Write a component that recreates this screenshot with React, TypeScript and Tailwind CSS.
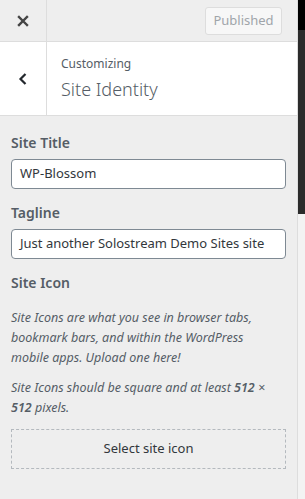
export default function App() {
  return (
    <div
      className="flex h-[499px] w-[305px] overflow-hidden bg-[#eeeeee] text-[#555d66]"
      style={{ fontFamily: '"Noto Sans", "Open Sans", sans-serif' }}
    >
      <div className="flex w-[298px] flex-col border-r border-[#dddddd]">
        <header className="flex h-[42px] shrink-0 items-center border-b border-[#dddddd] bg-[#eeeeee]">
          <button className="flex h-full w-[47px] items-center justify-center border-r border-[#dddddd] text-[#444]">
            <svg width="12" height="12" viewBox="0 0 12 12">
              <path d="M2 2 L10 10 M10 2 L2 10" stroke="currentColor" strokeWidth="2.4" strokeLinecap="square" />
            </svg>
          </button>
          <div className="flex flex-1 justify-end pr-[15px]">
            <span className="flex h-[28px] w-[77px] items-center justify-center rounded-[3px] border border-[#dddddd] bg-[#f7f7f7] text-[13px] text-[#a0a5aa]">
              Published
            </span>
          </div>
        </header>

        <div className="flex h-[74px] shrink-0 border-b border-[#dddddd] bg-white">
          <button className="flex w-[47px] items-center justify-center border-r border-[#dddddd] text-[#23282d]">
            <svg width="10" height="14" viewBox="0 0 10 14">
              <path d="M7.5 2 L2.5 7 L7.5 12" fill="none" stroke="currentColor" strokeWidth="2.2" />
            </svg>
          </button>
          <div className="flex flex-col justify-center pl-[14px]">
            <span className="text-[12px] leading-[16px] text-[#555d66]">Customizing</span>
            <span className="mt-[5px] text-[18px] font-light leading-[24px] text-[#555d66]">Site Identity</span>
          </div>
        </div>

        <div className="flex flex-col px-[11px] pt-[17px]">
          <label className="text-[14px] font-semibold leading-[20px]">Site Title</label>
          <div className="mt-[6px] flex h-[30px] items-center rounded-[4px] border border-[#7e8993] bg-white px-[8px] text-[13px] text-[#32373c]">
            WP-Blossom
          </div>

          <label className="mt-[14px] text-[14px] font-semibold leading-[20px]">Tagline</label>
          <div className="mt-[6px] flex h-[30px] items-center whitespace-nowrap rounded-[4px] border border-[#7e8993] bg-white px-[8px] text-[13px] text-[#32373c]">
            Just another Solostream Demo Sites site
          </div>

          <label className="mt-[14px] text-[14px] font-semibold leading-[20px]">Site Icon</label>
          <p className="mt-[15px] text-[12.5px] italic leading-[20px]">
            Site Icons are what you see in browser tabs, bookmark bars, and within the WordPress
            <br />
            mobile apps. Upload one here!
          </p>
          <p className="mt-[10px] text-[12.5px] italic leading-[20px]">
            Site Icons should be square and at least <strong className="font-semibold">512</strong> ×{" "}
            <strong className="font-semibold">512</strong> pixels.
          </p>
          <div className="mt-[11px] flex h-[40px] items-center justify-center border border-dashed border-[#b4b9be] text-[13px] text-[#32373c]">
            Select site icon
          </div>
        </div>
      </div>
      <div className="flex w-[7px] flex-col">
        <div className="h-[30px] bg-black" />
        <div className="h-[184px] bg-[#2b2b2b]" />
        <div className="flex-1 bg-[#f3f3f3]" />
      </div>
    </div>
  );
}
